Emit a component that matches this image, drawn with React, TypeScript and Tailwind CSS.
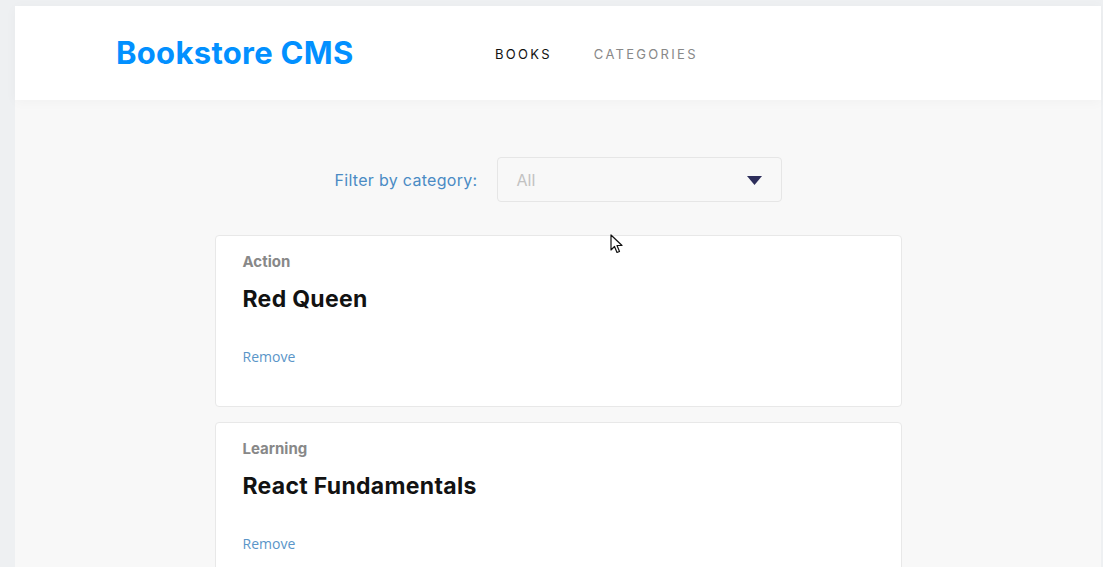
const books = [
  { id: 1, category: 'Action', title: 'Red Queen' },
  { id: 2, category: 'Learning', title: 'React Fundamentals' },
];

function Cursor() {
  return (
    <svg
      className="absolute left-[610px] top-[234px]"
      width="14"
      height="21"
      viewBox="0 0 14 21"
    >
      <path
        d="M1 1 L1 16 L4.5 12.5 L7 18.5 L9.5 17.5 L7 11.5 L12 11.5 Z"
        fill="#fff"
        stroke="#111"
        strokeWidth="1.2"
        strokeLinejoin="round"
      />
    </svg>
  );
}

function BookCard({ category, title }: { category: string; title: string }) {
  return (
    <div className="bg-white border border-[#e8e8e8] rounded-[4px] h-[172px] pl-[27px] pt-[17px]">
      <div className="text-[15px] font-bold text-[#888888] leading-[18px] font-['Inter',sans-serif]">
        {category}
      </div>
      <h2 className="mt-[14px] text-[23px] font-bold text-[#121212] leading-[28px] tracking-[0.3px] font-['Inter',sans-serif]">
        {title}
      </h2>
      <button
        type="button"
        className="mt-[35px] text-[14px] text-[#5a95c8] leading-[18px] font-['Open_Sans',sans-serif]"
      >
        Remove
      </button>
    </div>
  );
}

export default function App() {
  return (
    <div className="relative h-[567px] overflow-hidden bg-[#eef0f2] pt-[6px] pl-[15px] pr-[2px]">
      <div className="h-full bg-[#f8f8f8]">
        <header className="h-[94px] bg-white flex items-center pl-[101px] shadow-[0_2px_12px_rgba(0,0,0,0.03)]">
          <h1 className="text-[31px] font-bold text-[#0290ff] font-['Inter',sans-serif] tracking-[0.3px] w-[379px]">
            Bookstore CMS
          </h1>
          <nav className="flex gap-[42px] mt-[3px] text-[13px] tracking-[2.3px] font-['Inter',sans-serif]">
            <span className="text-[#121212]">BOOKS</span>
            <span className="text-[#888888]">CATEGORIES</span>
          </nav>
        </header>

        <main className="flex flex-col items-center pt-[57px]">
          <div className="flex items-center gap-[19px]">
            <label
              htmlFor="category"
              className="text-[16px] text-[#4a8bc4] tracking-[0.3px] font-['Inter',sans-serif]"
            >
              Filter by category:
            </label>
            <div className="relative w-[285px] h-[45px] border border-[#e6e6e6] rounded-[4px] bg-[#f8f8f8] flex items-center pl-[19px]">
              <span className="text-[16px] text-[#c2c2c2] font-['Inter',sans-serif]">All</span>
              <svg
                className="absolute right-[19px] top-[18px]"
                width="15"
                height="9"
                viewBox="0 0 15 9"
              >
                <path d="M0 0 H15 L7.5 9 Z" fill="#2d2e5b" />
              </svg>
            </div>
          </div>

          <div className="w-[687px] mt-[33px] flex flex-col gap-[15px]">
            {books.map((book) => (
              <BookCard key={book.id} category={book.category} title={book.title} />
            ))}
          </div>
        </main>
      </div>
      <Cursor />
    </div>
  );
}
